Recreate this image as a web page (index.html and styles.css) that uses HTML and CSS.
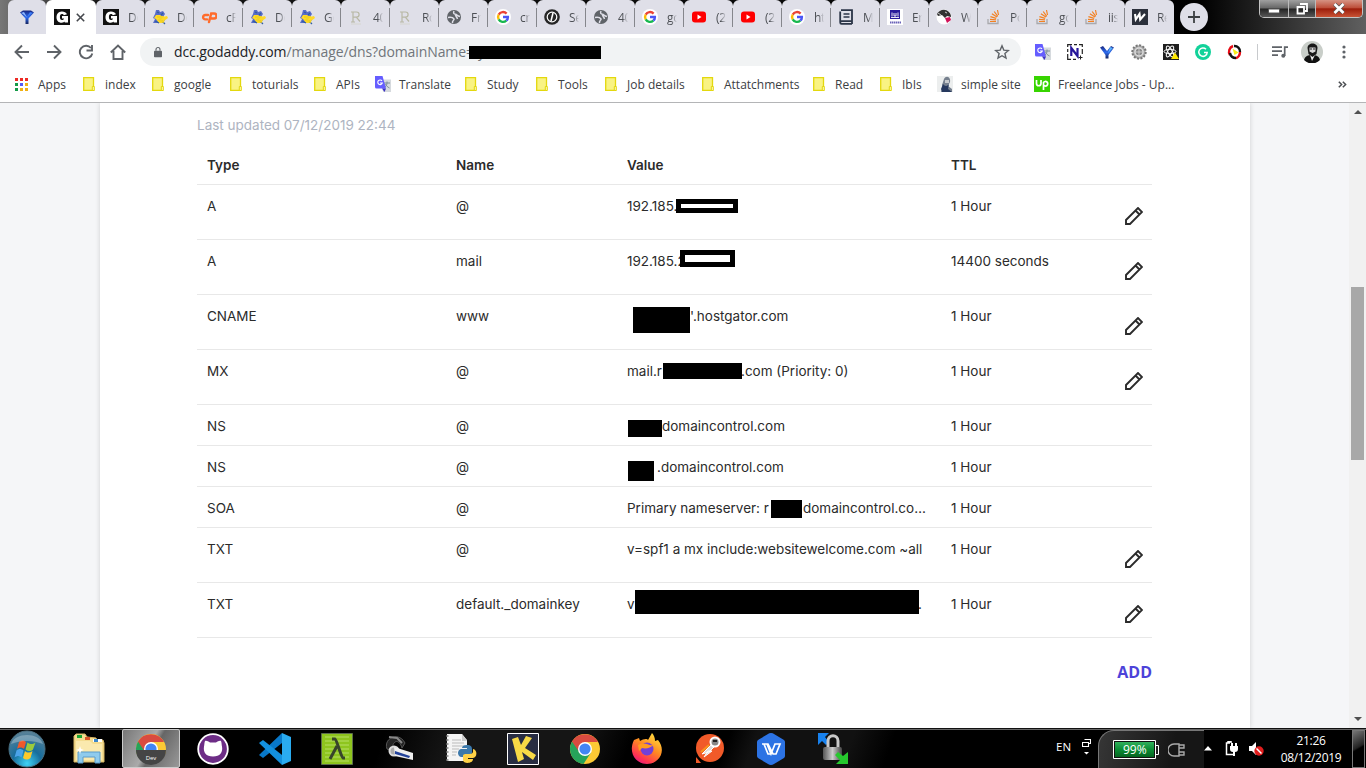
FILE: index.html
```html
<!DOCTYPE html>
<html lang="en">
<head>
<meta charset="utf-8">
<title>DNS Management</title>
<link rel="stylesheet" href="styles.css">
</head>
<body>
<svg class="defs" width="0" height="0">
  <defs>
    <linearGradient id="gem" x1="0" y1="0" x2="0" y2="1"><stop offset="0" stop-color="#18267e"/><stop offset=".5" stop-color="#2e6cf0"/><stop offset="1" stop-color="#15245f"/></linearGradient>
    <linearGradient id="bat" x1="0" y1="0" x2="0" y2="1"><stop offset="0" stop-color="#31b05c"/><stop offset=".5" stop-color="#0a8d34"/><stop offset="1" stop-color="#056420"/></linearGradient>
    <radialGradient id="orb" cx=".5" cy=".9" r=".9"><stop offset="0" stop-color="#3fd3f5"/><stop offset=".45" stop-color="#176d9c"/><stop offset="1" stop-color="#5c8297"/></radialGradient>
    <linearGradient id="fox" x1=".8" y1="0" x2=".2" y2="1"><stop offset="0" stop-color="#ffe23f"/><stop offset=".45" stop-color="#ff8a22"/><stop offset=".8" stop-color="#ff3550"/><stop offset="1" stop-color="#e31587"/></linearGradient>
    <linearGradient id="lockg" x1="0" y1="0" x2="1" y2="0"><stop offset="0" stop-color="#555"/><stop offset=".5" stop-color="#ccc"/><stop offset="1" stop-color="#444"/></linearGradient>
  </defs>
  <symbol id="i-gem" viewBox="0 0 16 16"><path d="M1 3.5 4 1.5h8l3 2L9.500 9.500v5.500h-3V9.500z" fill="url(#gem)"/><path d="M2 4 5 3l3 5.500L4 5z" fill="#8fb9ff"/><path d="m8 8 3-5 3 1z" fill="#3c7df5"/></symbol>
  <symbol id="i-gd" viewBox="0 0 16 16"><path d="M0 0h16v16H0z" fill="#111"/><path d="M13 5.200C12 3 10 2.300 7.600 2.400 4.500 2.500 2.500 5 2.500 8.200c0 3.300 2 5.500 5.200 5.500 1.500 0 2.400-.5 3-1.200v1H14V7H8v2.600h2c-.3 1-1 1.500-2 1.500-1.400 0-2.100-1.200-2.100-3s.7-3 2-3c1 0 1.600.4 1.900 1.200z" fill="#fff"/></symbol>
  <symbol id="i-gator" viewBox="0 0 16 16"><path d="M4 1h3l1 2 3-1 2 3-2 3 2 3-3 3H6L1 14l2-4-2-1 2-4z" fill="#586cc9"/><path d="M4 6h4l3 2 4-1 1 2-4 3-2 2H7L4 10 2 9z" fill="#ffd928"/><path d="m5 3 2 1M9 6l2-2M3 12l4 2M10 12l3 3" stroke="#315fa0" stroke-width="1.200"/><path d="M5 8h5l-3 3 5 2" fill="none" stroke="#f4d320" stroke-width="2"/></symbol>
  <symbol id="i-cp" viewBox="0 0 16 16"><path d="M7 6H4.300a2.200 2.200 0 0 0 0 4.400H6M8 13l2.200-8.500H13a2.300 2.300 0 0 1 0 5h-2.500" fill="none" stroke="#ff6c2c" stroke-width="2.400" stroke-linecap="round"/></symbol>
  <symbol id="i-r" viewBox="0 0 16 16"><path d="M5 13V3h3.500a2.500 2.500 0 0 1 0 5.200H5M8.500 8.300l3.500 4.200M3 13h4M3 3h3" fill="none" stroke="#b8b8a4" stroke-width="1.200"/><path d="M3 15h10" stroke="#d6d6cf"/></symbol>
  <symbol id="i-globe" viewBox="0 0 16 16"><circle cx="8" cy="8" r="7" fill="#5f6368"/><path d="M2 8.500c3-.5 5 0 6 1.500.5 1.500-2 1-1.500 4M8 2c-1 2 0 3 1.500 3.300S11 7 14 7.500M9.500 5.500C9 7 11 8 11.500 10" fill="none" stroke="#dfdfe8" stroke-width="1.500"/></symbol>
  <symbol id="i-g" viewBox="0 0 16 16"><circle cx="8" cy="8" r="8" fill="#fff"/><g fill="none" stroke-width="2.400"><path d="M11.600 4.600A4.900 4.900 0 0 0 3.700 5.600" stroke="#ea4335"/><path d="M3.700 5.600a4.900 4.900 0 0 0 0 4.800" stroke="#fbbc05"/><path d="M3.700 10.400a4.900 4.900 0 0 0 7.600 1.200" stroke="#18b84f"/><path d="M11.300 11.600C12.600 10.500 13 9.500 12.900 8H8" stroke="#4a55f5"/></g></symbol>
  <symbol id="i-code" viewBox="0 0 16 16"><circle cx="8" cy="8" r="7.800" fill="#262626"/><circle cx="8" cy="8" r="4.800" fill="none" stroke="#fff" stroke-width="1.200"/><path d="m9 4-2 8" stroke="#fff" stroke-width="1.600"/></symbol>
  <symbol id="i-yt" viewBox="0 0 16 16"><rect x="1" y="2.500" width="14" height="11" rx="3" fill="#f00"/><path d="m6.500 5.500 4 2.500-4 2.500z" fill="#fff"/></symbol>
  <symbol id="i-book" viewBox="0 0 16 16"><path d="M3 1.200h11v11H3.500a1.300 1.300 0 0 0 0 2.600H14M2.200 13V2.500M14 12v3" fill="none" stroke="#2b3547" stroke-width="1.800"/><path d="M5.500 5h6M5.500 8h6" stroke="#2b3547" stroke-width="1.400"/></symbol>
  <symbol id="i-ionos" viewBox="0 0 16 16"><path d="M0 0h16v16H0z" fill="#fff"/><path d="M3 1h10v9H3z" fill="#281c9b"/><path d="M5 3.500v4M7 4v3h2V4M11 3.500v4M4 8.500h8" stroke="#fff" stroke-width=".9" fill="none"/><path d="M3 13.500h11" stroke="#6a62b8" stroke-width="2" stroke-dasharray="1.500 .5"/></symbol>
  <symbol id="i-face" viewBox="0 0 16 16"><circle cx="8" cy="8" r="7.500" fill="#fff"/><path d="M1 5C3 1 9-1 13 3c2 2 2 4 2 5l-4-1-2 2-3-3-4 1z" fill="#333"/><path d="M9 9l5-1 1 3-4 3z" fill="#d21259"/><path d="m2 4 3 2m4-3 2 1" stroke="#ccc"/></symbol>
  <symbol id="i-so" viewBox="0 0 16 16"><path d="M3 10v4.500h10V10" fill="none" stroke="#a9a9ad" stroke-width="1.300"/><path d="M5 12.500h6M5 10.300l6 .6M5.400 7.700l5.800 1.700M6.900 4.800l5.100 3.300M9.200 2.500l3.600 4.800M12.500 1l1 5" stroke="#f38122" stroke-width="1.200"/></symbol>
  <symbol id="i-w" viewBox="0 0 16 16"><path d="M0 0h16v16H0z" fill="#2b303b"/><path d="m3 5 .8 5.500L7.500 5l.7 5.500L13 5" fill="none" stroke="#fff" stroke-width="2.100"/></symbol>
  <symbol id="i-folder" viewBox="0 0 12 14"><path d="M.7.700h9.800v12.600H.7z" fill="#f9f383" stroke="#e3d80d" stroke-width="1.300"/><path d="M9.300 9.500h2v4h-2z" fill="#fdfabd" stroke="#e3d80d"/></symbol>
  <symbol id="i-trans" viewBox="0 0 16 16"><path d="M6 3.500h10V16H8z" fill="#d6dade"/><path d="M9 7h6M12 5.500V7c0 3-2 4-3 5m1.500-4c1 2 2 3 4 4" fill="none" stroke="#7d8e98"/><path d="M0 0h7.500l3.500 12.500H1.500A1.500 1.500 0 0 1 0 11z" fill="#655dff"/><path d="M7 12.500h4L9.500 16z" fill="#3d32c5"/><path d="M7 5A2.300 2.300 0 1 0 7.300 7H5" fill="none" stroke="#fff" stroke-width="1.100"/></symbol>
  <symbol id="i-chrome" viewBox="0 0 32 32"><circle cx="16" cy="16" r="15" fill="#fcc934"/><path d="M16 16 3 8.500A15 15 0 0 0 14.500 31L22 19.500z" fill="#26a35a"/><path d="M3 8.500A15 15 0 0 1 29 9H16l-6.500 9z" fill="#d94b40"/><circle cx="16" cy="16" r="7" fill="#fff"/><circle cx="16" cy="16" r="5.600" fill="#4285f4"/></symbol>
  <symbol id="i-pencil" viewBox="0 0 18 18"><path d="M1 17v-4L13 1l4 4L5 17zM10.500 3.500l4 4" fill="none" stroke="#2b2b2b" stroke-width="1.900"/></symbol>
</svg>

<div class="screen">
  <header class="tabs">
    <div class="tab pinned"><svg class="fav"><use href="#i-gem"/></svg></div>
    <div class="tab active"><svg class="fav"><use href="#i-gd"/></svg><svg class="close" viewBox="0 0 9 9"><path d="m.8.800 7.400 7.400m0-7.400L.8 8.200" stroke="#45484d" stroke-width="1.600"/></svg></div>
    <div class="tab"><svg class="fav"><use href="#i-gd"/></svg><span>Do</span></div>
    <div class="tab"><svg class="fav"><use href="#i-gator"/></svg><span>Do</span></div>
    <div class="tab"><svg class="fav"><use href="#i-cp"/></svg><span>cP</span></div>
    <div class="tab"><svg class="fav"><use href="#i-gator"/></svg><span>Do</span></div>
    <div class="tab"><svg class="fav"><use href="#i-gator"/></svg><span>Go</span></div>
    <div class="tab"><svg class="fav"><use href="#i-r"/></svg><span>40</span></div>
    <div class="tab"><svg class="fav"><use href="#i-r"/></svg><span>Ro</span></div>
    <div class="tab"><svg class="fav"><use href="#i-globe"/></svg><span>Fr</span></div>
    <div class="tab"><svg class="fav"><use href="#i-g"/></svg><span>cr</span></div>
    <div class="tab"><svg class="fav"><use href="#i-code"/></svg><span>Se</span></div>
    <div class="tab"><svg class="fav"><use href="#i-globe"/></svg><span>40</span></div>
    <div class="tab"><svg class="fav"><use href="#i-g"/></svg><span>go</span></div>
    <div class="tab"><svg class="fav"><use href="#i-yt"/></svg><span>(2</span></div>
    <div class="tab"><svg class="fav"><use href="#i-yt"/></svg><span>(2</span></div>
    <div class="tab"><svg class="fav"><use href="#i-g"/></svg><span>ht</span></div>
    <div class="tab"><svg class="fav"><use href="#i-book"/></svg><span>M</span></div>
    <div class="tab"><svg class="fav"><use href="#i-ionos"/></svg><span>Er</span></div>
    <div class="tab"><svg class="fav"><use href="#i-face"/></svg><span>W</span></div>
    <div class="tab"><svg class="fav"><use href="#i-so"/></svg><span>Po</span></div>
    <div class="tab"><svg class="fav"><use href="#i-so"/></svg><span>go</span></div>
    <div class="tab"><svg class="fav"><use href="#i-so"/></svg><span>iis</span></div>
    <div class="tab last"><svg class="fav"><use href="#i-w"/></svg><span>Re</span></div>
    <div class="newtab"><svg width="12" height="12" viewBox="0 0 12 12"><path d="M6 0v12M0 6h12" stroke="#3c4043" stroke-width="1.800"/></svg></div>
    <div class="winbtns">
      <i class="min"><svg width="12" height="6" viewBox="0 0 12 6"><path d="M.5 1h11v4H.5z" fill="#fff" stroke="#555"/></svg></i>
      <i class="max"><svg width="12" height="12" viewBox="0 0 12 12"><path d="M4 1h7v7H9M1.500 4h6.500v6.500H1.500z" fill="none" stroke="#fff" stroke-width="1.800"/></svg></i>
      <i class="cls"><svg width="12" height="11" viewBox="0 0 12 11"><path d="m1.500 1 9 9m0-9-9 9" stroke="#555" stroke-width="4"/><path d="m1.500 1 9 9m0-9-9 9" stroke="#fff" stroke-width="2.600"/></svg></i>
    </div>
  </header>

  <nav class="toolbar">
    <svg class="nav" viewBox="0 0 16 16"><path d="M15 8H2M8 1.500 1.500 8 8 14.500" /></svg>
    <svg class="nav" viewBox="0 0 16 16"><path d="M1 8h13M8 1.500 14.500 8 8 14.500"/></svg>
    <svg class="nav" viewBox="0 0 16 16"><path d="M13 4a6.300 6.300 0 1 0 1.300 5.500M14 1v5.500H8.500"/></svg>
    <svg class="nav" viewBox="0 0 16 16"><path d="M.8 8.500 8 1.500l7.200 7M3.500 7v8h9V7"/></svg>
    <div class="omnibox">
      <svg class="lock" viewBox="0 0 10 13"><path d="M1 5h8a1 1 0 0 1 1 1v6a1 1 0 0 1-1 1H1a1 1 0 0 1-1-1V6a1 1 0 0 1 1-1z" fill="#5f6368"/><path d="M2.500 5V3.300a2.500 2.500 0 0 1 5 0V5" fill="none" stroke="#5f6368" stroke-width="1.400"/></svg>
      <div class="url"><b>dcc.godaddy.com</b><span class="path">/manage/dns?domainName=r</span><i class="tail">y</i><i class="redact"></i></div>
      <svg class="star" viewBox="0 0 16 16"><path d="m8 1.800 1.800 4.300 4.600.4-3.500 3 1.100 4.600L8 11.700l-4 2.400 1.100-4.600-3.500-3 4.600-.4z" fill="none" stroke="#5f6368" stroke-width="1.400"/></svg>
    </div>
    <div class="exts">
      <svg viewBox="0 0 16 16"><use href="#i-trans"/></svg>
      <svg viewBox="0 0 16 16"><path d="M.7 3V.700H5M7 .7h3M12 .7h3.300V3M.7 5v3M.7 10v5.300H4M6 15.300h3M15.300 5v5" fill="none" stroke="#222" stroke-width="1.200"/><path d="M4.300 12V4l6.200 8V4" fill="none" stroke="#26169a" stroke-width="2.200"/><path d="M13.500 11.500v4M11.500 13.500h4" stroke="#222"/></svg>
      <svg viewBox="0 0 16 16"><path d="M1 3.500 4 2l4 5 4-5 3 1.500L9.500 11v3.500h-3V11z" fill="url(#gem)"/><path d="m11 3 3 1-5 5z" fill="#58b1ff"/></svg>
      <svg viewBox="0 0 16 16"><circle cx="8" cy="8" r="6.700" fill="#aaa" stroke="#777" stroke-width="2" stroke-dasharray="2 1.500"/><circle cx="8" cy="8" r="4" fill="#888" stroke="#ddd" stroke-width="1.500"/><path d="M8 3v10M3 8h10" stroke="#ccc"/></svg>
      <svg viewBox="0 0 16 16"><path d="M0 0h16v16H0z" fill="#1e1e1e"/><g fill="none" stroke="#fff"><ellipse cx="7" cy="7.500" rx="6" ry="2.200"/><ellipse cx="7" cy="7.500" rx="6" ry="2.200" transform="rotate(60 7 7.500)"/><ellipse cx="7" cy="7.500" rx="6" ry="2.200" transform="rotate(120 7 7.500)"/></g><path d="m12 8.500 4 6.500H8z" fill="#ffe800"/></svg>
      <svg viewBox="0 0 16 16"><circle cx="8" cy="8" r="8" fill="#12d29a"/><path d="M11 5.200a4.200 4.200 0 1 0 1.200 3.300H9" fill="none" stroke="#fff" stroke-width="1.500"/></svg>
      <svg viewBox="0 0 16 16"><path d="M3 11a6 6 0 0 1 3-9" fill="none" stroke="#e60c15" stroke-width="2.400"/><path d="M7 2a5.500 5.500 0 0 1 6 6" fill="none" stroke="#111" stroke-width="2.400"/><path d="M13 8c0 3-2 6-4 6" fill="none" stroke="#e60c15" stroke-width="2.400"/><path d="M9 14c-3 0-5.500-2-6-5" fill="none" stroke="#111" stroke-width="2.400"/><path d="m5.500 4.500 6 4-4 2.500z" fill="#f8ee17"/></svg>
    </div>
    <i class="sep"></i>
    <svg class="queue" viewBox="0 0 16 12"><path d="M0 1.200h10M0 5.200h10M0 9.200h6M12.700 10V1.200H16" fill="none" stroke="#5f6368" stroke-width="1.700"/><circle cx="11.300" cy="9.700" r="2" fill="#5f6368"/></svg>
    <svg class="avatar" viewBox="0 0 22 22"><circle cx="11" cy="11" r="11" fill="#c9cec9"/><path d="M3 19c1-4 4-5 8-5s7 1 8 5a11 11 0 0 1-16 0z" fill="#111"/><path d="m9 14 2 6 3-6z" fill="#eee"/><path d="M6.500 7c0-6 10-6 10 0l-1 6-4 3-4-3z" fill="#181818"/><path d="M8.500 6.500h6v4l-3 1.500-3-1.500z" fill="#d8d8d8"/><path d="M9 8h2m1 0h2" stroke="#222" stroke-width="1.200"/></svg>
    <svg class="dots" viewBox="0 0 4 14"><circle cx="2" cy="2" r="1.600"/><circle cx="2" cy="7" r="1.600"/><circle cx="2" cy="12" r="1.600"/></svg>
  </nav>

  <nav class="bookmarks">
    <div class="bm apps"><svg width="13" height="13" viewBox="0 0 13 13"><path d="M0 0h3v3H0zM5 0h3v3H5zM10 0h3v3h-3z" fill="#ed2a24"/><path d="M0 5h3v3H0zM0 10h3v3H0z" fill="#149b48"/><path d="M5 5h3v3H5z" fill="#5459f5"/><path d="M10 5h3v3h-3zM5 10h3v3H5zM10 10h3v3h-3z" fill="#f0b013"/></svg><span>Apps</span></div>
    <div class="bm"><svg class="fo"><use href="#i-folder"/></svg><span>index</span></div>
    <div class="bm"><svg class="fo"><use href="#i-folder"/></svg><span>google</span></div>
    <div class="bm"><svg class="fo"><use href="#i-folder"/></svg><span>toturials</span></div>
    <div class="bm"><svg class="fo"><use href="#i-folder"/></svg><span>APIs</span></div>
    <div class="bm site"><svg class="fav"><use href="#i-trans"/></svg><span>Translate</span></div>
    <div class="bm"><svg class="fo"><use href="#i-folder"/></svg><span>Study</span></div>
    <div class="bm"><svg class="fo"><use href="#i-folder"/></svg><span>Tools</span></div>
    <div class="bm"><svg class="fo"><use href="#i-folder"/></svg><span>Job details</span></div>
    <div class="bm"><svg class="fo"><use href="#i-folder"/></svg><span>Attatchments</span></div>
    <div class="bm"><svg class="fo"><use href="#i-folder"/></svg><span>Read</span></div>
    <div class="bm"><svg class="fo"><use href="#i-folder"/></svg><span>IbIs</span></div>
    <div class="bm site"><svg class="fav" viewBox="0 0 16 16"><path d="M0 0h16v16H0z" fill="#eceeee"/><path d="M7 3c2-4 7-2 6 3l-2 4 4 3v3H4l2-5-1-2z" fill="#76808e"/><path d="M6 8c2 3 5 2 6 0l-1 5 4 3H5l-1-3z" fill="#26385e"/><path d="M8 4h4v3H8z" fill="#c8cacd"/></svg><span>simple site</span></div>
    <div class="bm site"><svg class="fav" viewBox="0 0 16 16"><path d="M0 0h16v16H0z" fill="#37d400"/><path d="M2.500 4v3.500c0 3 4.500 3 4.500 0V4M9.500 14V6.500a2.300 2.300 0 1 1 0 2.500" fill="none" stroke="#fff" stroke-width="1.700"/></svg><span>Freelance Jobs - Up...</span></div>
    <svg class="more" viewBox="0 0 9 7"><path d="m.8.800 2.800 2.700L.8 6.200m4-5.400 2.800 2.700-2.800 2.700" fill="none" stroke="#4a4d51" stroke-width="1.500"/></svg>
  </nav>

  <main class="page">
    <section class="card">
      <p class="updated">Last updated 07/12/2019 22:44</p>
      <div class="row head"><span>Type</span><span>Name</span><span>Value</span><span>TTL</span></div>
      <div class="row tall"><span>A</span><span>@</span><span class="val">192.185.<i class="box b1"></i></span><span>1 Hour</span><svg class="pencil"><use href="#i-pencil"/></svg></div>
      <div class="row tall"><span>A</span><span>mail</span><span class="val">192.185.2<i class="box b2"></i></span><span>14400 seconds</span><svg class="pencil"><use href="#i-pencil"/></svg></div>
      <div class="row tall"><span>CNAME</span><span>www</span><span class="val v3"><em>'.hostgator.com</em><i class="box b3"></i></span><span>1 Hour</span><svg class="pencil"><use href="#i-pencil"/></svg></div>
      <div class="row tall"><span>MX</span><span>@</span><span class="val v4"><u>mail.r</u><em>.com (Priority: 0)</em><i class="box b4"></i></span><span>1 Hour</span><svg class="pencil"><use href="#i-pencil"/></svg></div>
      <div class="row"><span>NS</span><span>@</span><span class="val v5"><em>domaincontrol.com</em><i class="box b5"></i></span><span>1 Hour</span></div>
      <div class="row"><span>NS</span><span>@</span><span class="val v6"><em>.domaincontrol.com</em><i class="box b6"></i></span><span>1 Hour</span></div>
      <div class="row"><span>SOA</span><span>@</span><span class="val v7"><u>Primary nameserver: r</u><em>domaincontrol.co…</em><i class="box b7"></i></span><span>1 Hour</span></div>
      <div class="row tall"><span>TXT</span><span>@</span><span class="val">v=spf1 a mx include:websitewelcome.com ~all</span><span>1 Hour</span><svg class="pencil"><use href="#i-pencil"/></svg></div>
      <div class="row tall"><span>TXT</span><span>default._domainkey</span><span class="val v9"><u>v</u><em>.</em><i class="box b9"></i></span><span>1 Hour</span><svg class="pencil"><use href="#i-pencil"/></svg></div>
      <div class="add">ADD</div>
    </section>
    <aside class="scroll"><i class="up"></i><i class="thumb"></i><i class="down"></i></aside>
  </main>

  <footer class="taskbar">
    <div class="slot start"><svg width="38" height="38" viewBox="0 0 38 38"><circle cx="19" cy="19" r="18" fill="url(#orb)" stroke="#4a7082"/><path d="M11 12c3-2 5-2 7 0l-2 7c-2-2-5-2-7 0z" fill="#f0592a"/><path d="M19.500 12.500c3 2 5 2 8 0l-2.500 7c-2 2-5 2-7.500 0z" fill="#9bcb3c"/><path d="M8.500 20.500c2-2 5-2 7 0l-2 7c-2-2-4-2-7 0z" fill="#4ba3e8"/><path d="M17 21c2 2 5 2 7.500 0l-2 7c-3 2-5 2-7.500 0z" fill="#fdc92b"/><path d="M3 14C7 2 31 2 35 14 25 10 13 10 3 14z" fill="#fff" opacity=".28"/></svg></div>
    <div class="slot"><svg width="34" height="32" viewBox="0 0 34 32"><path d="M2 3 4 1h9l2 3 9 1 1 2h6l1 3v19H2z" fill="#f4dc90" stroke="#d4b464"/><path d="M5 2h5v3H5z" fill="#19a432"/><path d="M13 4h5v3h-5z" fill="#d95328"/><path d="M21 6h9v3h-9z" fill="#fff"/><path d="M22 6h4v3h-4z" fill="#3b87c9"/><path d="M4 8h14l3 3h9v16H4z" fill="#fae9ae"/><path d="M6 19h22v11h-5v-6H11v6H6z" fill="#8fcbed" stroke="#5b9ccb"/><path d="m8 13 1 3 3 1-3 1-1 3-1-3-3-1 3-1z" fill="#fff"/></svg></div>
    <div class="slot current"><svg width="32" height="32" viewBox="0 0 32 32"><use href="#i-chrome"/><path d="M1 17h30a15 15 0 0 1-30 0z" fill="#454545"/></svg><span class="dev">Dev</span></div>
    <div class="slot"><svg width="32" height="32" viewBox="0 0 32 32"><circle cx="16" cy="16" r="14.800" fill="#6d2d86" stroke="#fff" stroke-width="1.800"/><path d="M8 8c2-.5 3 .5 5 1.500h6c2-1 3-2 5-1.500.8 2 .5 4 1 5.500 1 6-2 10-9 10s-10-4-9-10c.5-1.500.2-3.500 1-5.500z" fill="#fff"/></svg></div>
    <div class="slot"><svg width="32" height="32" viewBox="0 0 32 32"><path d="M23 0v10L4 25l-4-3L23 0z" fill="#0878c9"/><path d="M0 10 4 7l19 15v10L0 10z" fill="#1390de"/><path d="m23 0 9 4v24l-9 4z" fill="#2aabf0"/></svg></div>
    <div class="slot"><svg width="32" height="32" viewBox="0 0 32 32"><path d="M.5.500h31v31H.5z" fill="#8ec51e" stroke="#5c6c4c"/><path d="M4 4h24M4 8h24M4 12h24M4 16h24M4 20h24M4 24h24M4 28h24" stroke="#a9d64d" stroke-width="1.500"/><path d="M11 6h3c2 1 6 18 8 19h2M16 13l-7 13" fill="none" stroke="#38452b" stroke-width="3"/></svg></div>
    <div class="slot"><svg width="32" height="32" viewBox="0 0 32 32"><path d="M4 16C0 5 16-2 22 10l-3 5C16 5 9 7 9 18z" fill="#242424" stroke="#555"/><path d="m6 4 8 1 5 5" fill="none" stroke="#888" stroke-width="2"/><circle cx="11" cy="18" r="4.500" fill="#aaa" stroke="#ddd" stroke-width="2"/><path d="m11 14 19 6v7l-18-4z" fill="#eee"/><path d="m12 18 15 5-1 2-14-4z" fill="#23429a"/></svg></div>
    <div class="slot"><svg width="32" height="32" viewBox="0 0 32 32"><path d="M2 1h15l5 6v21H2z" fill="#f4f4f4"/><path d="M2.500 2v27" stroke="#999" stroke-width="2" stroke-dasharray="2 2"/><path d="M7 7h9M7 10h12M7 13h13M7 16h7M7 19h5M7 22h4" stroke="#bbb"/><path d="M17 1v7h5" fill="#ccc"/><path d="M22 12c4 0 5 2 5 4v4c0 2-6 1-7 4h-4c-4-1-4-7 0-8h6v-1h-5c0-2 2-3 5-3z" fill="#3c79ab"/><path d="M28 16c5 1 4 9 0 9h-5v1h5c0 5-10 5-10 1v-4c0-4 9 0 10-4z" fill="#ffd247"/></svg></div>
    <div class="slot"><svg width="32" height="32" viewBox="0 0 32 32"><path d="M.5.500h31v31H.5z" fill="#282d42" stroke="#fff"/><path d="m5 6 6-2 3 8 5-9 6 2-7 10 11 7-3 5-11-8 2 7-6 3z" fill="#f8da46"/></svg></div>
    <div class="slot"><svg width="32" height="32"><use href="#i-chrome"/></svg></div>
    <div class="slot"><svg width="32" height="32" viewBox="0 0 32 32"><path d="M3 7 8 5l1 3c3-2 7-3 8-1l4-7c2 2 3 5 3 8l3-1c9 11 1 24-11 24S-3 19 3 7z" fill="url(#fox)"/><circle cx="16" cy="16" r="6.500" fill="#7140d8"/><path d="M7 12c7-4 10 1 15 0-2 3-7 4-11 3l-3 3z" fill="#ff9b20"/></svg></div>
    <div class="slot"><svg width="30" height="32" viewBox="0 0 30 32"><circle cx="16" cy="15" r="14" fill="#f15a29"/><path d="M2 24v6h5z" fill="#f15a29"/><path d="m17 12-9 9 7-2 5-5zM14 18l-4 6 8-6z" fill="#ddd" stroke="#fff"/><path d="m7 19 8-7" stroke="#f7941e" stroke-width="2"/><circle cx="21" cy="9" r="4.500" fill="#888" stroke="#fff" stroke-width="2"/><path d="M19 8h4" stroke="#222" stroke-width="2"/></svg></div>
    <div class="slot"><svg width="30" height="32" viewBox="0 0 30 32"><path d="M15 0q2 0 3 1l10 6q1 1 1 2v14q0 1-1 2l-10 6q-3 2-6 0L2 25q-1-1-1-2V9q0-1 1-2l10-6q1-1 3-1z" fill="#2c73e4"/><path d="M6 11h5l4 10 4-10h5l-4 10h-3l-5-10-4 0 4 10h3" fill="none" stroke="#fff" stroke-width="1.700"/></svg></div>
    <div class="slot"><svg width="32" height="32" viewBox="0 0 32 32"><path d="M1 0h11L8 4l4 5-3 3-4-4-4 4z" fill="#1781ee"/><path d="M11 14V8c0-7 10-7 10 0v6" fill="none" stroke="#c8c8c8" stroke-width="3"/><rect x="6" y="14" width="19" height="13" rx="2" fill="url(#lockg)"/><path d="m18 22 3-3 5 4 5-4v12H19l4-4z" fill="#26c82e"/></svg></div>
    <div class="tray">
      <span class="lang">EN</span>
      <svg class="restore" viewBox="0 0 9 18"><path d="M2.500.500h6v4h-2M.5 3.500h6v4h-6z" fill="none" stroke="#fff" stroke-width="1.100"/><path d="M2 13h5L4.500 15.500z" fill="#fff"/></svg>
      <div class="power">
        <svg width="47" height="20" viewBox="0 0 47 20"><path d="M.5.500h42v18H.5z" fill="#111" stroke="#fff"/><path d="M2 2h39v15H2z" fill="url(#bat)"/><path d="M42 5.500h3.500v9H42" fill="none" stroke="#fff"/></svg><span class="pct">99%</span>
        <svg class="plug" width="17" height="14" viewBox="0 0 17 14"><path d="M11 1H6a6 6 0 0 0 0 12h5zM11 2h5v3h-5M11 9h5v3h-5" fill="none" stroke="#aaa" stroke-width="1.400"/></svg>
      </div>
      <svg class="chev" viewBox="0 0 8 5"><path d="M4 0 8 4.500H0z" fill="#fff"/></svg>
      <svg class="pw" viewBox="0 0 14 15"><path d="M5 2H1.500v11.500H8M3 2V.500h3V2" fill="none" stroke="#fff" stroke-width="1.500"/><path d="M5 5h8v3q0 3-3 3v4H8v-4Q5 11 5 8zM6 2h2v3H6zM10 2h2v3h-2z" fill="#fff"/></svg>
      <svg class="spk" viewBox="0 0 15 15"><path d="M0 5h3l4-4v13l-4-4H0z" fill="#fff"/><circle cx="10" cy="10" r="4.700" fill="#e21d1d"/><path d="m7.500 7.500 5 5" stroke="#fff" stroke-width="1.500"/></svg>
      <div class="clock"><span>21:26</span><span>08/12/2019</span></div>
      <i class="desk"></i>
    </div>
  </footer>
</div>
</body>
</html>
```
FILE: styles.css
```css
* { box-sizing: border-box; }
body { margin: 0; overflow: hidden; font-family: "Open Sans", sans-serif; }
i, em { font-style: normal; }
u { text-decoration: none; }
svg { display: block; flex: none; }
.defs { position: absolute; }
.screen { width: 1366px; height: 768px; display: flex; flex-direction: column; }

/* tab strip */
.tabs { height: 34px; display: flex; padding-left: 8px; background: linear-gradient(90deg, #777 0, #555 30px, #151515 100px, #000 1200px, #222 1260px, #606060 1366px); }
.tab { width: 49px; height: 34px; flex: none; display: flex; align-items: center; padding-left: 7px; background: #dfdfe8; border-radius: 6px 6px 0 0; position: relative; font-size: 12px; color: #4d5055; }
.tab span { width: 10px; margin-left: 9px; overflow: hidden; white-space: nowrap; letter-spacing: -.3px; -webkit-mask-image: linear-gradient(90deg, #000 45%, transparent); }
.tab::after { content: ""; position: absolute; right: 0; top: 8px; width: 1px; height: 19px; background: #85868c; }
.tab.pinned { width: 38px; padding-left: 11px; }
.tab.active { width: 50px; background: #fff; }
.tab.pinned::after, .tab.active::after, .tab.last::after { display: none; }
.tab.active { padding-left: 8px; }
.close { width: 9px; height: 9px; margin-left: 6px; }
.fav { width: 16px; height: 16px; }
.newtab { width: 28px; height: 28px; margin: 3px 0 0 6px; border-radius: 50%; background: #dfdfe8; display: flex; align-items: center; justify-content: center; }
.winbtns { margin: 0 3px 0 auto; width: 104px; height: 18px; display: flex; border: 1px solid #c3c3c3; border-top: 0; border-radius: 0 0 5px 5px; overflow: hidden; }
.winbtns i { display: flex; align-items: center; justify-content: center; background: linear-gradient(#a0a0a0, #666 48%, #232323 52%, #585858); border-right: 1px solid #bbb; }
.winbtns .min { width: 29px; padding-top: 5px; }
.winbtns .max { width: 27px; }
.winbtns .cls { flex: 1; border: 0; background: linear-gradient(#d69383, #bd4e39 46%, #9d1e0b 52%, #c85335); }

/* toolbar */
.toolbar { height: 36px; display: flex; align-items: center; padding-left: 14px; background: #fff; }
.nav { width: 16px; height: 16px; margin-right: 16px; fill: none; stroke: #5f6368; stroke-width: 1.900; }
.omnibox { width: 881px; height: 28px; margin-left: -2px; padding: 0 11px 0 14px; border-radius: 14px; background: #f1f3f4; display: flex; align-items: center; }
.lock { width: 8px; height: 12px; }
.url { position: relative; flex: 1; margin-left: 12px; font-size: 14px; line-height: 20px; color: #70757a; white-space: nowrap; }
.url b { font-weight: 400; color: #202124; }
.url b, .url .path { letter-spacing: -.1px; }
.url .tail { position: absolute; left: 304px; top: 0; }
.url .redact { position: absolute; left: 295px; top: 4px; width: 132px; height: 13px; background: #000; }
.star { width: 16px; height: 16px; }
.exts { display: flex; gap: 16px; margin-left: 14px; }
.exts svg { width: 16px; height: 16px; }
.sep { width: 1px; height: 16px; margin-left: 14px; background: #c8cacd; }
.queue { width: 16px; height: 12px; margin-left: 14px; }
.avatar { width: 22px; height: 22px; margin-left: 13px; }
.dots { width: 4px; height: 14px; margin-left: 19px; fill: #5f6368; }

/* bookmarks */
.bookmarks { height: 33px; display: grid; align-items: center; padding: 0 0 4px 15px; background: #fff; border-bottom: 1px solid #b4b5b7; font-size: 12px; color: #3c4043; white-space: nowrap;
  grid-template-columns: 68px 69px 78px 84px 61px 90px 71px 69px 97px 111px 67px 57px 97px 304px 9px; }
.bm { display: flex; align-items: center; gap: 10px; }
.bm.site { gap: 8px; }
.fo { width: 12px; height: 14px; }
.more { width: 9px; height: 7px; }

/* page */
.page { height: 625px; display: flex; background: #f5f6f8; overflow: hidden; }
.card { width: 1150px; margin-left: 100px; padding: 12px 98px 0 97px; background: #fff; box-shadow: 0 0 5px rgba(0,0,0,.16); font: 14px/20px Inter, sans-serif; color: #2b2b2b; }
.updated { margin: 0; font-size: 13.500px; color: #aeb4c1; }
.row { display: grid; grid-template-columns: 249px 171px 324px 174px 18px; height: 41px; padding: 11px 0 0 10px; border-bottom: 1px solid #e8e8e8; font-size: 13.500px; white-space: nowrap; }
.row.head { height: 50px; padding-top: 20px; font-weight: 600; }
.row.tall { height: 55px; }
.pencil { width: 18px; height: 18px; margin-top: 11px; }
.val { position: relative; display: flex; }
.box { position: absolute; background: #000; }
.b1 { left: 49px; top: 3px; width: 62px; height: 14px; border: 5px solid #000; background: #fff; }
.b2 { left: 53px; top: -1px; width: 55px; height: 17px; border: 5px solid #000; background: #fff; }
.b3 { left: 6px; top: 1px; width: 57px; height: 26px; }
.b4 { left: 36px; top: 2px; width: 79px; height: 16px; }
.b5 { left: 1px; top: 4px; width: 34px; height: 17px; }
.b6 { left: 1px; top: 4px; width: 26px; height: 20px; }
.b7 { left: 144px; top: 2px; width: 31px; height: 18px; }
.b9 { left: 8px; top: -4px; width: 284px; height: 24px; }
.v3 { padding-left: 63px; }
.v4 u { width: 114px; }
.v5 { padding-left: 35px; }
.v6 { padding-left: 30px; }
.v7 u { width: 176px; }
.v9 u { width: 291px; }
.add { margin-top: 24px; text-align: right; font: 700 16px/20px "Open Sans", sans-serif; color: #4c43d9; }
.scroll { width: 17px; margin-left: auto; background: #f1f1f1; display: flex; flex-direction: column; align-items: center; }
.up, .down { border: 4px solid transparent; }
.up { border-bottom-color: #505050; border-top: 0; margin-top: 7px; }
.down { border-top-color: #505050; border-bottom: 0; margin-top: auto; margin-bottom: 7px; }
.thumb { width: 13px; height: 173px; margin-top: 173px; background: #a8a8a8; }

/* taskbar */
.taskbar { height: 40px; display: flex; border-top: 1px solid #111; box-shadow: inset 0 1px #666; background: linear-gradient(110deg, #000 0 28%, #151515 33% 42%, #000 46% 53%, #111 55% 62%, #000 65%); }
.slot { width: 62px; display: flex; align-items: center; justify-content: center; }
.slot.start { width: 58px; padding-right: 4px; }
.slot.current { width: 58px; margin: 0 2px; border: 1px solid #ccc; border-radius: 2px; background: linear-gradient(120deg, #777, #aaa 45%, #666 55%, #999); position: relative; }
.dev { position: absolute; left: 0; right: 0; bottom: 5px; text-align: center; font-size: 6px; line-height: 8px; color: #fff; }
.tray { flex: 1; display: flex; align-items: center; color: #fff; font-size: 12px; padding-left: 192px; }
.lang { width: 26px; font-size: 11.500px; padding-bottom: 5px; }
.restore { width: 9px; height: 18px; margin-bottom: 2px; }
.power { width: 106px; height: 38px; margin: 1px 0 0 7px; padding-left: 14px; display: flex; align-items: center; position: relative; border-left: 1px solid #777; border-top: 1px solid #777; border-radius: 16px 0 0 0; background: linear-gradient(100deg, #363636, #161616 70%); }
.pct { position: absolute; left: 24px; top: 10px; line-height: 17px; }
.plug { margin-left: 8px; }
.chev { width: 8px; height: 5px; }
.pw { width: 14px; height: 15px; margin-left: 13px; }
.spk { width: 15px; height: 15px; margin-left: 10px; }
.clock { width: 72px; margin-left: 11px; display: flex; flex-direction: column; align-items: center; line-height: 17px; letter-spacing: -.3px; }
.desk { width: 13px; height: 38px; margin-left: auto; margin-right: 1px; border: 1px solid #777; background: linear-gradient(150deg, #777, #222 45%, #000 50%); }
```
